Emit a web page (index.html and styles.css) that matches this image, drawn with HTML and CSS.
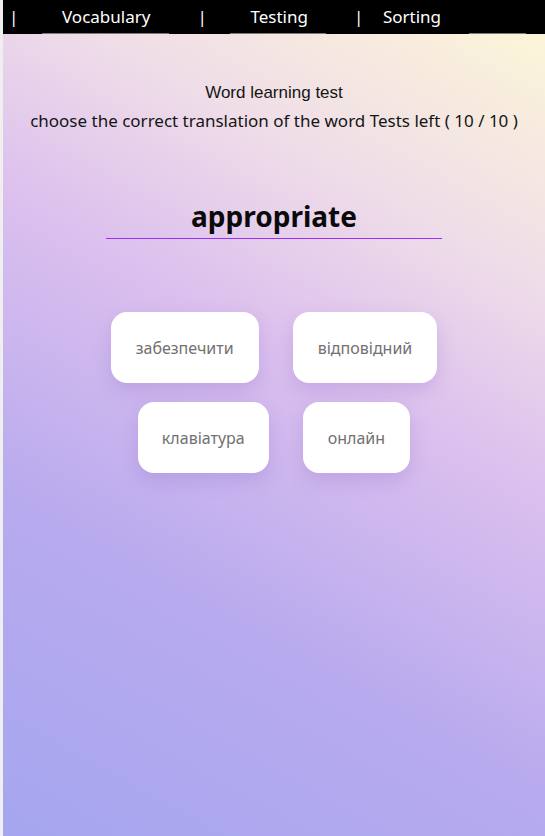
FILE: index.html
```html
<!DOCTYPE html>
<html lang="en">
<head>
<meta charset="utf-8">
<title>Word learning test</title>
<link rel="stylesheet" href="styles.css">
</head>
<body>
<nav class="nav">
  <span class="sep sep-1">|</span>
  <a class="nav-link link-vocab" href="#">Vocabulary</a>
  <span class="sep sep-2">|</span>
  <a class="nav-link link-testing" href="#">Testing</a>
  <span class="sep sep-3">|</span>
  <a class="nav-link link-sorting" href="#">Sorting</a>
  <span class="nav-link link-empty"></span>
</nav>
<main class="main">
  <header class="intro">
    <div class="intro-title">Word learning test</div>
    <div class="intro-sub">choose the correct translation of the word Tests left ( 10 / 10 )</div>
  </header>
  <div class="word-wrap">
    <div class="word">appropriate</div>
  </div>
  <div class="answers">
    <div class="answer-row">
      <button class="answer">забезпечити</button>
      <button class="answer">відповідний</button>
    </div>
    <div class="answer-row">
      <button class="answer answer-wide">клавіатура</button>
      <button class="answer">онлайн</button>
    </div>
  </div>
</main>
</body>
</html>
```
FILE: styles.css
```css
html {
  background: #efefef;
}
body {
  margin: 0 0 0 3px;
  min-height: 100vh;
  font-family: "Noto Sans", "Open Sans", sans-serif;
  background: linear-gradient(29deg, #a5a6f0 0%, #b8aaee 30%, #dcc0ee 57%, #efdde8 75%, #fef8d6 100%);
}
.nav {
  display: flex;
  align-items: flex-start;
  height: 34px;
  background: #000;
  color: #fff;
  font-size: 17px;
}
.sep {
  display: block;
  width: 4px;
  text-align: center;
  line-height: 33px;
  color: #fff;
}
.sep-1 { margin-left: 6px; }
.sep-2 { margin-left: 28px; }
.sep-3 { margin-left: 28px; }
.nav-link {
  display: block;
  height: 33px;
  line-height: 33px;
  color: #fff;
  text-decoration: none;
  border-bottom: 1px solid #7a7a7a;
}
.link-vocab { margin-left: 29px; padding: 0 19px 0 20px; }
.link-testing { margin-left: 29px; padding: 0 18px 0 20px; }
.link-sorting { margin-left: 25px; border-bottom-color: transparent; }
.link-empty { margin-left: 28px; width: 57px; }

.main {
  display: flex;
  flex-direction: column;
  align-items: center;
}
.intro {
  margin-top: 45px;
  text-align: center;
  line-height: 28px;
  font-size: 17px;
  color: #151515;
}
.intro-title {
  font-family: "Liberation Sans", Arial, sans-serif;
}
.word-wrap {
  margin-top: 63px;
  width: 336px;
  height: 41px;
  box-sizing: border-box;
  border-bottom: 1px solid #9a2ff8;
  text-align: center;
}
.word {
  font-size: 28px;
  font-weight: 700;
  line-height: 36px;
  color: #0a0a0a;
}
.answers {
  margin-top: 73px;
  display: flex;
  flex-direction: column;
  gap: 19px;
}
.answer-row {
  display: flex;
  justify-content: center;
  gap: 34px;
}
.answer {
  height: 71px;
  padding: 0 25px;
  border: none;
  border-radius: 16px;
  background: #fff;
  color: #727070;
  font-family: "Noto Sans", "Open Sans", sans-serif;
  font-size: 16px;
  box-shadow: 0 8px 18px rgba(130, 90, 190, 0.22);
  cursor: pointer;
}
.answer-wide {
  padding: 0 24px;
}
```
